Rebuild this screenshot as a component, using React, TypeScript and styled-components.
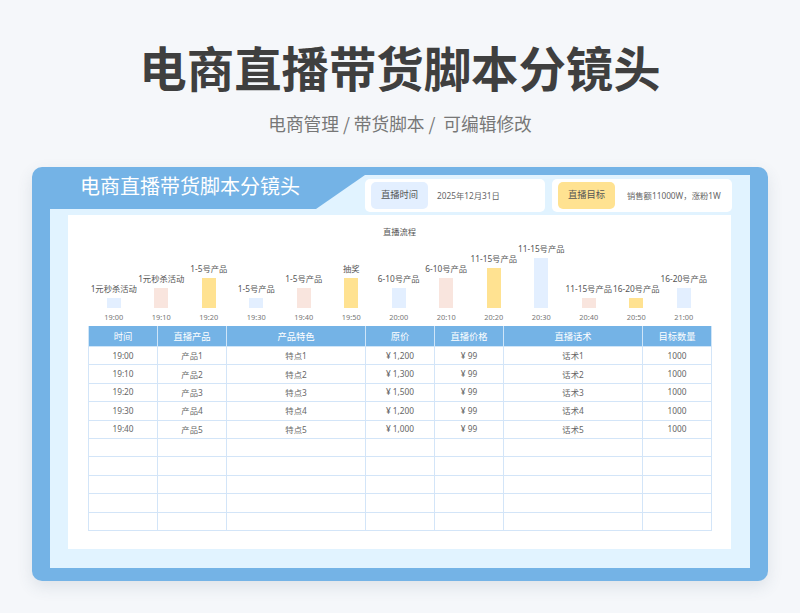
import styled, { createGlobalStyle } from 'styled-components';

const GlobalStyle = createGlobalStyle`
  html, body {
    margin: 0;
    padding: 0;
    background: #f5f7fa;
  }
  body {
    font-family: "Noto Sans", "Noto Sans CJK SC", sans-serif;
  }
`;

const Page = styled.div`
  width: 800px;
  height: 613px;
  overflow: hidden;
  background: #f5f7fa;
  display: flex;
  flex-direction: column;
  align-items: center;
`;

const Heading = styled.h1`
  margin: 33px 0 0;
  height: 68px;
  line-height: 68px;
  font-family: "Noto Sans CJK SC", sans-serif;
  font-size: 47.4px;
  font-weight: 700;
  color: #3f3f3f;
`;

const Subheading = styled.div`
  margin-top: 9px;
  height: 26px;
  line-height: 26px;
  font-family: "Noto Sans CJK SC", sans-serif;
  font-size: 17.7px;
  color: #777;
  white-space: pre;
`;

const Card = styled.div`
  margin-top: 31px;
  width: 736px;
  height: 414px;
  box-sizing: border-box;
  padding: 8px 18px 13px;
  background: #74b3e6;
  border-radius: 10px;
  box-shadow: 0 6px 16px rgba(60, 80, 110, 0.12);
`;

const Panel = styled.div`
  height: 393px;
  background: #e1f3ff;
  display: flex;
  flex-direction: column;
`;

const TopRow = styled.div`
  height: 40px;
  display: flex;
  flex-shrink: 0;
`;

const Banner = styled.div`
  width: 315px;
  height: 34px;
  box-sizing: border-box;
  padding-left: 30px;
  background: #74b3e6;
  clip-path: polygon(0 0, 100% 0, 266px 100%, 0 100%);
  color: #fff;
  font-family: "Noto Sans CJK SC", sans-serif;
  font-size: 20px;
  line-height: 21px;
`;

const InfoGroup = styled.div`
  display: flex;
  gap: 7px;
  margin-top: 4px;
`;

const InfoCard = styled.div`
  width: 180px;
  height: 33px;
  box-sizing: border-box;
  padding: 3px 6px;
  background: #fff;
  border-radius: 5px;
  display: flex;
  align-items: center;
  color: #666;
`;

const Badge = styled.div<{ $tone: string }>`
  width: 57px;
  height: 27px;
  flex-shrink: 0;
  border-radius: 5px;
  background: ${({ $tone }) => $tone};
  color: #555;
  font-size: 9.3px;
  line-height: 25px;
  text-align: center;
`;

const InfoText = styled.div<{ $gap: number }>`
  margin-left: ${({ $gap }) => $gap}px;
  margin-bottom: 2px;
  font-size: 8.3px;
  white-space: nowrap;
`;

const Sheet = styled.div`
  width: 663px;
  height: 334px;
  margin-left: 18px;
  box-sizing: border-box;
  padding: 11px 20px 0;
  background: #fff;
`;

const ChartTitle = styled.div`
  height: 12px;
  line-height: 11px;
  font-size: 8.3px;
  color: #555;
  text-align: center;
`;

const Chart = styled.div`
  height: 88px;
  display: grid;
  grid-template-columns: repeat(13, 47.5px);
  margin-left: 2px;
`;

const Column = styled.div`
  display: flex;
  flex-direction: column;
  align-items: center;
  justify-content: flex-end;
`;

const BarLabel = styled.div`
  margin-bottom: 4.5px;
  font-size: 8.3px;
  line-height: 11px;
  color: #555;
  white-space: nowrap;
`;

const Bar = styled.div<{ $height: number; $tone: string }>`
  width: 14px;
  height: ${({ $height }) => $height}px;
  background: ${({ $tone }) => $tone};
`;

const TimeLabel = styled.div`
  height: 18px;
  line-height: 18px;
  font-size: 7.4px;
  color: #777;
`;

const Table = styled.table`
  width: 623px;
  table-layout: fixed;
  border-collapse: collapse;
`;

const Th = styled.th`
  height: 20px;
  padding: 0;
  background: #74b3e6;
  border: 1px solid #cfe5f8;
  border-top: none;
  color: #fff;
  font-size: 9.3px;
  font-weight: 400;
  text-align: center;
`;

const Td = styled.td`
  height: 18.4px;
  padding: 0 0 1px;
  box-sizing: border-box;
  border: 1px solid #d3e5f8;
  color: #666;
  font-size: 8.3px;
  text-align: center;
`;

const BLUE = '#e3efff';
const PINK = '#f9e5de';
const YELLOW = '#ffe291';

const steps = [
  { label: '1元秒杀活动', time: '19:00', height: 10, tone: BLUE },
  { label: '1元秒杀活动', time: '19:10', height: 20, tone: PINK },
  { label: '1-5号产品', time: '19:20', height: 30, tone: YELLOW },
  { label: '1-5号产品', time: '19:30', height: 10, tone: BLUE },
  { label: '1-5号产品', time: '19:40', height: 20, tone: PINK },
  { label: '抽奖', time: '19:50', height: 30, tone: YELLOW },
  { label: '6-10号产品', time: '20:00', height: 20, tone: BLUE },
  { label: '6-10号产品', time: '20:10', height: 30, tone: PINK },
  { label: '11-15号产品', time: '20:20', height: 40, tone: YELLOW },
  { label: '11-15号产品', time: '20:30', height: 50, tone: BLUE },
  { label: '11-15号产品', time: '20:40', height: 10, tone: PINK },
  { label: '16-20号产品', time: '20:50', height: 10, tone: YELLOW },
  { label: '16-20号产品', time: '21:00', height: 20, tone: BLUE },
];

const columns = [
  { title: '时间', width: 69 },
  { title: '直播产品', width: 69 },
  { title: '产品特色', width: 139 },
  { title: '原价', width: 69 },
  { title: '直播价格', width: 69 },
  { title: '直播话术', width: 139 },
  { title: '目标数量', width: 69 },
];

const rows = [
  ['19:00', '产品1', '特点1', '¥ 1,200', '¥ 99', '话术1', '1000'],
  ['19:10', '产品2', '特点2', '¥ 1,300', '¥ 99', '话术2', '1000'],
  ['19:20', '产品3', '特点3', '¥ 1,500', '¥ 99', '话术3', '1000'],
  ['19:30', '产品4', '特点4', '¥ 1,200', '¥ 99', '话术4', '1000'],
  ['19:40', '产品5', '特点5', '¥ 1,000', '¥ 99', '话术5', '1000'],
  ['', '', '', '', '', '', ''],
  ['', '', '', '', '', '', ''],
  ['', '', '', '', '', '', ''],
  ['', '', '', '', '', '', ''],
  ['', '', '', '', '', '', ''],
];

const App = () => (
  <Page>
    <GlobalStyle />
    <Heading>电商直播带货脚本分镜头</Heading>
    <Subheading>电商管理 / 带货脚本 /  可编辑修改</Subheading>
    <Card>
      <Panel>
        <TopRow>
          <Banner>电商直播带货脚本分镜头</Banner>
          <InfoGroup>
            <InfoCard>
              <Badge $tone="#e3efff">直播时间</Badge>
              <InfoText $gap={9}>2025年12月31日</InfoText>
            </InfoCard>
            <InfoCard>
              <Badge $tone="#ffe291">直播目标</Badge>
              <InfoText $gap={12}>销售额11000W，涨粉1W</InfoText>
            </InfoCard>
          </InfoGroup>
        </TopRow>
        <Sheet>
          <ChartTitle>直播流程</ChartTitle>
          <Chart>
            {steps.map((step) => (
              <Column key={step.time}>
                <BarLabel>{step.label}</BarLabel>
                <Bar $height={step.height} $tone={step.tone} />
                <TimeLabel>{step.time}</TimeLabel>
              </Column>
            ))}
          </Chart>
          <Table>
            <colgroup>
              {columns.map((col) => (
                <col key={col.title} width={col.width} />
              ))}
            </colgroup>
            <thead>
              <tr>
                {columns.map((col) => (
                  <Th key={col.title}>{col.title}</Th>
                ))}
              </tr>
            </thead>
            <tbody>
              {rows.map((row, i) => (
                <tr key={i}>
                  {row.map((cell, j) => (
                    <Td key={j}>{cell}</Td>
                  ))}
                </tr>
              ))}
            </tbody>
          </Table>
        </Sheet>
      </Panel>
    </Card>
  </Page>
);

export default App;
